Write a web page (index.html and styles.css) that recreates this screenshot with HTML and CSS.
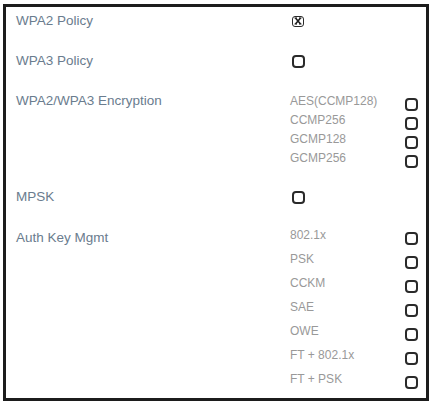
FILE: index.html
```html
<!DOCTYPE html>
<html lang="en">
  <head>
    <meta charset="UTF-8" />
    <meta name="viewport" content="width=device-width, initial-scale=1.0" />
    <title>Security Settings</title>
    <link rel="stylesheet" href="styles.css">
  </head>
  <body>
    <div class="panel">
      <div class="row">
        <span class="label">WPA2 Policy</span>
        <div class="control">
          <span class="cb checked">
            <svg width="8" height="8" viewBox="0 0 8 8">
              <path d="M1.5 1 L6.5 7 M6.5 1 L1.5 7" stroke="#1e1e1e" stroke-width="1.6" fill="none" />
              <path d="M0.5 1 H3 M5 1 H7.5 M0.5 7 H3 M5 7 H7.5" stroke="#1e1e1e" stroke-width="1.2" fill="none" />
            </svg>
          </span>
        </div>
      </div>

      <div class="row">
        <span class="label">WPA3 Policy</span>
        <div class="control">
          <span class="cb"></span>
        </div>
      </div>

      <div class="row">
        <span class="label">WPA2/WPA3 Encryption</span>
        <ul class="options enc">
          <li><span>AES(CCMP128)</span><span class="cb"></span></li>
          <li><span>CCMP256</span><span class="cb"></span></li>
          <li><span>GCMP128</span><span class="cb"></span></li>
          <li><span>GCMP256</span><span class="cb"></span></li>
        </ul>
      </div>

      <div class="row">
        <span class="label">MPSK</span>
        <div class="control">
          <span class="cb"></span>
        </div>
      </div>

      <div class="row auth">
        <span class="label">Auth Key Mgmt</span>
        <ul class="options">
          <li><span>802.1x</span><span class="cb"></span></li>
          <li><span>PSK</span><span class="cb"></span></li>
          <li><span>CCKM</span><span class="cb"></span></li>
          <li><span>SAE</span><span class="cb"></span></li>
          <li><span>OWE</span><span class="cb"></span></li>
          <li><span>FT + 802.1x</span><span class="cb"></span></li>
          <li><span>FT + PSK</span><span class="cb"></span></li>
        </ul>
      </div>
    </div>
  </body>
</html>
```

FILE: styles.css
```css
body {
  margin: 0;
  background-color: #ffffff;
  font-family: "Liberation Sans", Arial, sans-serif;
}

.panel {
  margin: 4px 3px;
  width: 426px;
  height: 397px;
  border: 3px solid #1c1c1c;
  padding: 4px 8px 0 10px;
  box-sizing: border-box;
  display: flex;
  flex-direction: column;
  gap: 20px;
}

.row {
  display: grid;
  grid-template-columns: 274px 1fr;
}

.row.auth {
  margin-top: -4px;
}

.row.auth .label {
  padding-top: 5px;
}

.label {
  font-size: 13.5px;
  line-height: 20px;
  color: #6a7c8e;
}

.control {
  display: flex;
  align-items: center;
  height: 20px;
  padding-left: 2px;
}

.options {
  list-style: none;
  margin: 0;
  padding: 0;
}

.options li {
  display: grid;
  grid-template-columns: 1fr 13px;
  align-items: center;
  height: 24px;
  font-size: 12px;
  color: #999999;
}

.options.enc li {
  height: 19px;
}

.options li .cb {
  margin-top: 7px;
}

.cb {
  display: inline-flex;
  align-items: center;
  justify-content: center;
  width: 13px;
  height: 13px;
  border: 2px solid #2a2a2a;
  border-radius: 4px;
  box-sizing: border-box;
}

.cb.checked {
  width: 12px;
  height: 11px;
  border-width: 1.5px;
  border-radius: 3px;
}
```
